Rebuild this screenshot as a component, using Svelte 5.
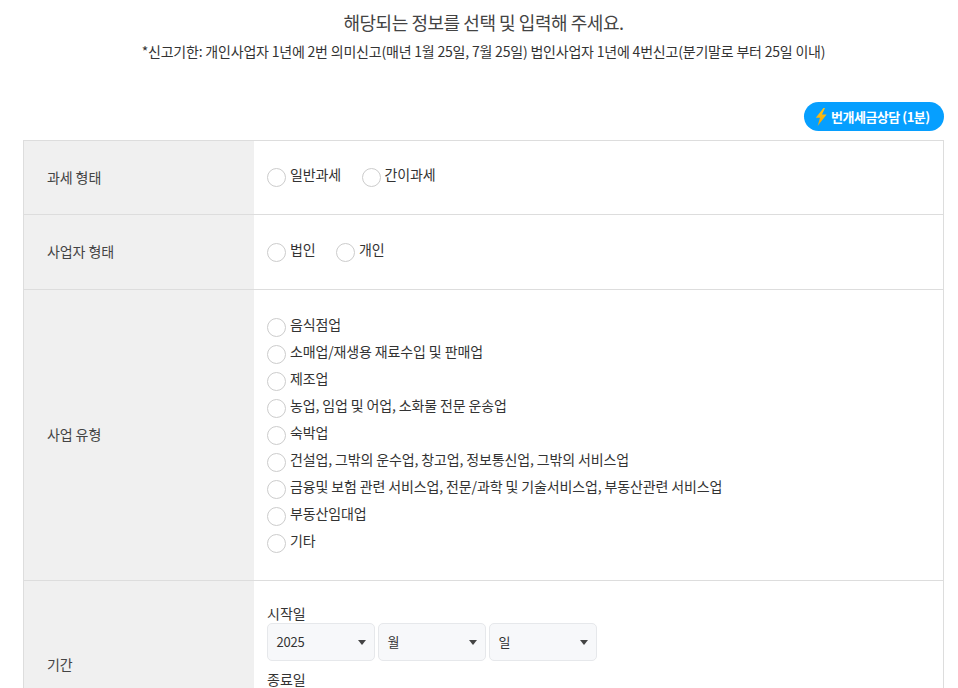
<script>
  const types = ['일반과세', '간이과세'];
  const owners = ['법인', '개인'];
  const biz = [
    '음식점업',
    '소매업/재생용 재료수입 및 판매업',
    '제조업',
    '농업, 임업 및 어업, 소화물 전문 운송업',
    '숙박업',
    '건설업, 그밖의 운수업, 창고업, 정보통신업, 그밖의 서비스업',
    '금융및 보험 관련 서비스업, 전문/과학 및 기술서비스업, 부동산관련 서비스업',
    '부동산임대업',
    '기타'
  ];
  const dates = ['2025', '월', '일'];
</script>

<div class="page">
  <header class="head">
    <h2>해당되는 정보를 선택 및 입력해 주세요.</h2>
    <p>*신고기한: 개인사업자 1년에 2번 의미신고(매년 1월 25일, 7월 25일) 법인사업자 1년에 4번신고(분기말로 부터 25일 이내)</p>
  </header>

  <div class="actions">
    <button class="bolt-btn">
      <svg width="14" height="20" viewBox="0 0 14 20">
        <defs><linearGradient id="bolt" x1="0" y1="0" x2="0" y2="1"><stop offset="0" stop-color="#ffc61a"/><stop offset="1" stop-color="#f5a300"/></linearGradient></defs>
        <path d="M9.5 1 L1.8 10.8 H6 L3.6 19 L12.6 7.6 H8 L11 1 Z" fill="url(#bolt)"/>
      </svg>
      <span>번개세금상담 (1분)</span>
    </button>
  </div>

  <section class="form">
    <div class="row r1">
      <div class="th">과세 형태</div>
      <div class="td inline up">
        {#each types as t}
          <label class="opt"><i class="radio"></i><span>{t}</span></label>
        {/each}
      </div>
    </div>
    <div class="row r2">
      <div class="th">사업자 형태</div>
      <div class="td inline">
        {#each owners as t}
          <label class="opt"><i class="radio"></i><span>{t}</span></label>
        {/each}
      </div>
    </div>
    <div class="row r3">
      <div class="th">사업 유형</div>
      <div class="td stack">
        {#each biz as t}
          <label class="opt"><i class="radio"></i><span>{t}</span></label>
        {/each}
      </div>
    </div>
    <div class="row r4">
      <div class="th">기간</div>
      <div class="td period">
        <div class="cap">시작일</div>
        <div class="selects">
          {#each dates as d}
            <div class="sel"><span>{d}</span><b class="caret"></b></div>
          {/each}
        </div>
        <div class="cap end">종료일</div>
        <div class="selects">
          {#each dates as d}
            <div class="sel"><span>{d}</span><b class="caret"></b></div>
          {/each}
        </div>
      </div>
    </div>
  </section>
</div>

<style>
  :global(html), :global(body) { margin: 0; height: 688px; overflow: hidden; background: #fff; }
  .page {
    font-family: "Noto Sans CJK KR", "Noto Sans", sans-serif;
    color: #333;
    padding: 0 14px 0 23px;
    height: 688px;
    overflow: hidden;
    box-sizing: border-box;
  }
  .head { text-align: center; padding-top: 9px; }
  .head h2 { margin: 0; font-size: 18px; font-weight: 400; line-height: 26px; color: #444; letter-spacing: -0.45px; }
  .head p { margin: 3px 0 0; font-size: 14px; line-height: 26px; letter-spacing: -0.2px; color: #333; }
  .actions { display: flex; justify-content: flex-end; margin-top: 38px; height: 38px; }
  .bolt-btn {
    height: 29px; width: 140px; border: 0; padding: 0 0 0 10px; border-radius: 15px;
    background: #069fff; color: #fff; font: inherit; font-size: 13px; font-weight: 700;
    letter-spacing: -0.5px; display: flex; align-items: center; gap: 3px; box-sizing: border-box;
  }
  .bolt-btn span { line-height: 29px; }
  .form { border: 1px solid #ddd; border-bottom: 0; }
  .row { display: grid; grid-template-columns: 230px 1fr; border-bottom: 1px solid #ddd; box-sizing: border-box; }
  .r1 { height: 74px; }
  .r2 { height: 75px; }
  .r3 { height: 291px; }
  .r4 { height: 168px; }
  .th { background: #f0f0f0; padding-left: 23px; padding-bottom: 2px; display: flex; align-items: center; font-size: 14px; color: #444; letter-spacing: -0.1px; box-sizing: border-box; }
  .td { padding-left: 13px; font-size: 14px; box-sizing: border-box; }
  .inline { display: flex; align-items: center; gap: 20.5px; }
  .stack { display: flex; flex-direction: column; justify-content: center; }
  .opt { display: flex; align-items: center; height: 27px; letter-spacing: -0.13px; color: #333; }
  .opt span { position: relative; top: -3px; line-height: 20px; }
  .up .opt span { top: -4px; }
  .radio { width: 17px; height: 17px; border: 1px solid #ccc; border-radius: 50%; margin-right: 4px; background: #fff; flex: none; }
  .period { padding-top: 22px; }
  .cap { font-size: 14px; line-height: 20px; letter-spacing: 0; }
  .cap.end { margin-top: 8px; }
  .selects { display: flex; gap: 3px; }
  .sel {
    width: 108px; height: 38px; box-sizing: border-box; border: 1px solid #e6e8eb; border-radius: 5px; background: #f7f8fa;
    display: flex; align-items: center; justify-content: space-between; padding: 0 8.5px 0 8.5px; font-size: 13px; letter-spacing: -0.2px; color: #333;
  }
  .sel span { position: relative; top: -1px; }
  .caret { width: 0; height: 0; border-left: 4.5px solid transparent; border-right: 4.5px solid transparent; border-top: 5px solid #444; }
</style>
